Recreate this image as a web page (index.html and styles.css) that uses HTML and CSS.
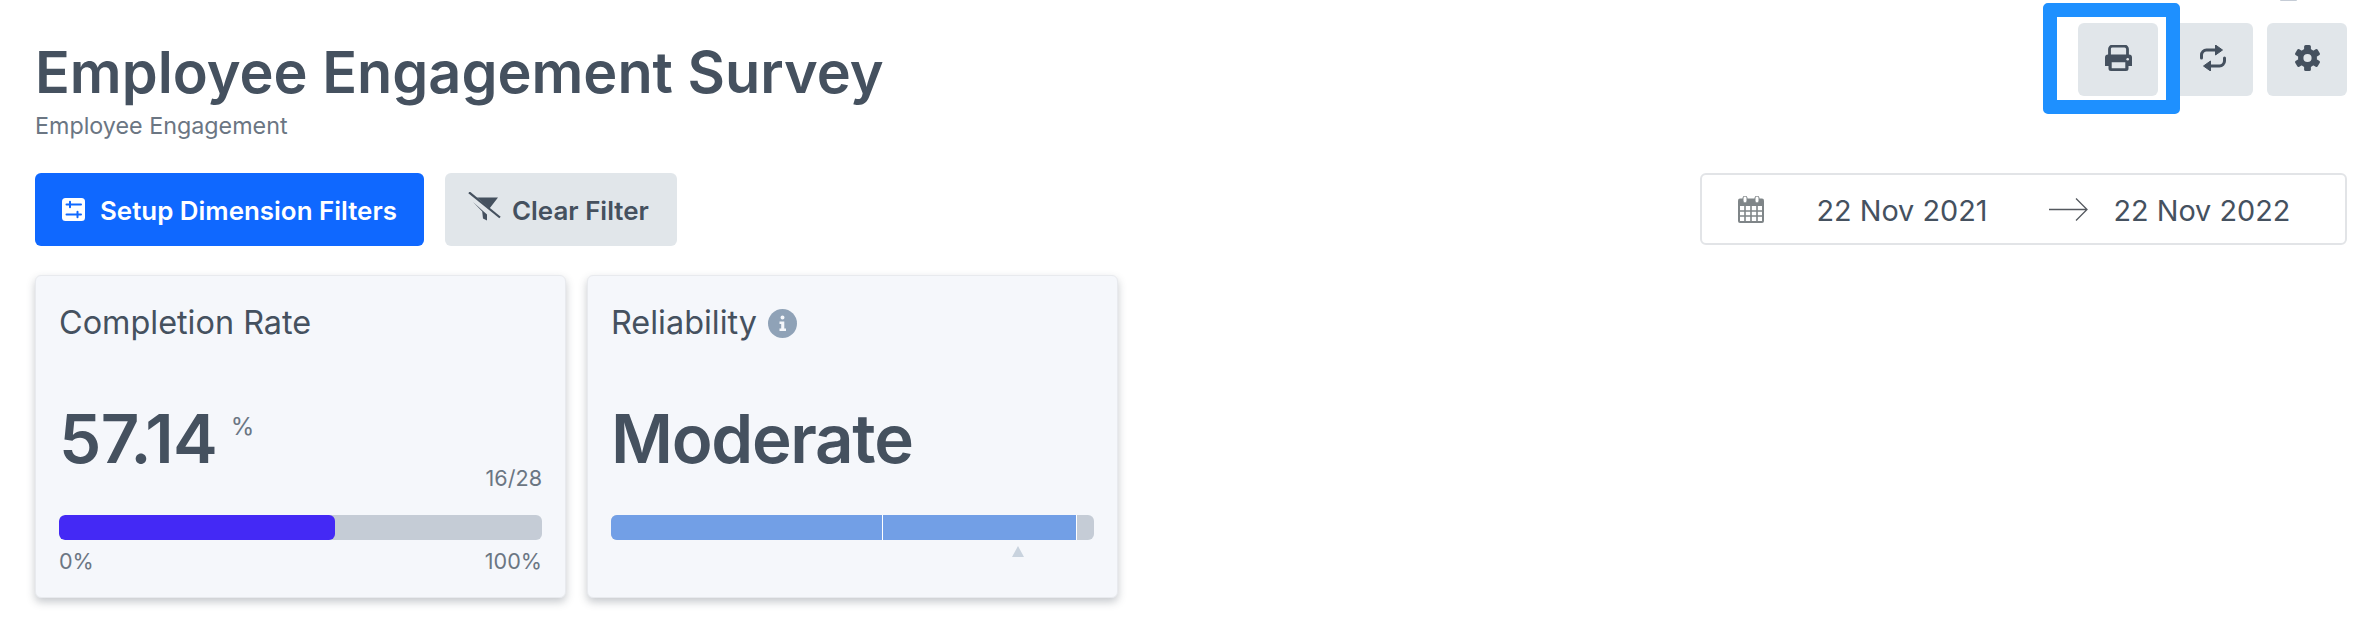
FILE: index.html
```html
<!DOCTYPE html>
<html lang="en">
<head>
<meta charset="utf-8">
<title>Employee Engagement Survey</title>
<link rel="stylesheet" href="styles.css">
</head>
<body>
<div class="top-mark"></div>
<main class="page">
  <header class="header">
    <div class="heading">
      <h1 class="title">Employee Engagement Survey</h1>
      <p class="subtitle">Employee Engagement</p>
    </div>
    <div class="actions">
      <button class="icon-btn icon-btn-print" type="button" aria-label="Print">
        <svg class="icon-print" viewBox="0 0 27 26"><path d="M4.500 11V4a3 3 0 0 1 3-3h12a3 3 0 0 1 3 3v7" fill="none" stroke="#45515f" stroke-width="2.800"/><path fill-rule="evenodd" fill="#45515f" d="M3 9.500h21a3 3 0 0 1 3 3v8.500h-3.500v2.500a2.500 2.500 0 0 1-2.500 2.500H6a2.500 2.500 0 0 1-2.500-2.500V21H0v-8.500a3 3 0 0 1 3-3zM6.700 17.300v6h13.600v-6z"/><circle cx="22.700" cy="14.200" r="1.300" fill="#e1e6ea"/></svg>
        <span class="highlight"></span>
      </button>
      <button class="icon-btn" type="button" aria-label="Refresh">
        <svg class="icon-repeat" viewBox="0 0 26 26"><g id="half"><path d="M1.500 13V10a5 5 0 0 1 5-5H16" fill="none" stroke="#45515f" stroke-width="3" stroke-linecap="round"/><path d="M15.500 0L22.500 5l-7 5z" fill="#45515f" stroke="#45515f" stroke-linejoin="round"/></g><use href="#half" transform="rotate(180 13 13)"/></svg>
      </button>
      <button class="icon-btn" type="button" aria-label="Settings">
        <svg class="icon-gear" viewBox="-12.500 -13 25 26"><circle r="6.800" fill="none" stroke="#45515f" stroke-width="5.400"/><g fill="#45515f"><rect x="-3.400" y="-13" width="6.800" height="6" rx="1.600"/><rect x="-3.400" y="-13" width="6.800" height="6" rx="1.600" transform="rotate(60)"/><rect x="-3.400" y="-13" width="6.800" height="6" rx="1.600" transform="rotate(120)"/><rect x="-3.400" y="-13" width="6.800" height="6" rx="1.600" transform="rotate(180)"/><rect x="-3.400" y="-13" width="6.800" height="6" rx="1.600" transform="rotate(240)"/><rect x="-3.400" y="-13" width="6.800" height="6" rx="1.600" transform="rotate(300)"/></g></svg>
      </button>
    </div>
  </header>

  <section class="toolbar">
    <div class="filters">
      <button class="btn btn-primary" type="button">
        <svg class="icon-sliders" viewBox="0 0 23 23"><rect width="23" height="23" rx="3.500" fill="#fff"/><g stroke="#0f68ff" stroke-width="2" fill="none" stroke-linecap="round"><path d="M4.500 6.500H19M8 3.800v5.400M4.500 16.500H19M15.500 13.800v5.400"/></g></svg>
        Setup Dimension Filters
      </button>
      <button class="btn btn-muted" type="button">
        <svg class="icon-clear" viewBox="0 0 33 29"><path d="M1 .3L32 25.500" stroke="#45515f" stroke-width="2.200" fill="none"/><path d="M9 5.500h21l-8.500 11zM5 10l14 12.500v6l-4-2-.8-7z" fill="#45515f"/></svg>
        Clear Filter
      </button>
    </div>
    <div class="date-range">
      <svg class="icon-calendar" viewBox="0 0 26 27"><rect y="2.500" width="26" height="24.500" rx="2" fill="#7f8588"/><g fill="#fff"><rect x="2" y="10" width="22" height="15"/><rect x="5" y="0" width="4" height="7" rx="2" stroke="#7f8588" stroke-width="1"/><rect x="17" y="0" width="4" height="7" rx="2" stroke="#7f8588" stroke-width="1"/></g><path d="M7 10v15M13 10v15M19 10v15M2 15h22M2 20h22" stroke="#7f8588" stroke-width="1.600"/></svg>
      <span class="date date-from">22 Nov 2021</span>
      <svg class="icon-arrow" viewBox="0 0 39 23"><path d="M0 11.500H38M27 .5l11 11-11 11" fill="none" stroke="#55595f" stroke-width="1.300"/></svg>
      <span class="date date-to">22 Nov 2022</span>
    </div>
  </section>

  <section class="cards">
    <article class="card">
      <h2 class="card-title">Completion Rate</h2>
      <div class="metric-row">
        <span class="metric metric-number">57.14</span><span class="unit">%</span>
      </div>
      <div class="count">16/28</div>
      <div class="bar"><div class="bar-fill" style="width:57.14%"></div></div>
      <div class="scale"><span>0%</span><span>100%</span></div>
    </article>
    <article class="card">
      <h2 class="card-title">Reliability
        <svg class="icon-info" viewBox="0 0 29 29"><circle cx="14.500" cy="14.500" r="14.500" fill="#8fa2b7"/><path d="M14.500 6.500a2 2 0 1 1 0 4 2 2 0 0 1 0-4zM11.500 12.500h4.800v7h1.700v2.500h-6.500v-2.500h1.700v-4.500h-1.700z" fill="#f5f7fb"/></svg>
      </h2>
      <div class="metric-row">
        <span class="metric">Moderate</span>
      </div>
      <div class="count count-empty"></div>
      <div class="bar bar-segments">
        <div class="seg seg-a"></div><div class="seg seg-b"></div>
      </div>
      <div class="pointer-track"><span class="pointer"></span></div>
    </article>
  </section>
</main>
</body>
</html>
```
FILE: styles.css
```css
* { box-sizing: border-box; }
html, body { margin: 0; padding: 0; background: #fff; }
body { font-family: Inter, "Liberation Sans", sans-serif; color: #45515f; height: 632px; overflow: hidden; position: relative; }
button { font-family: inherit; border: 0; cursor: pointer; }
.page { padding: 0 25px 0 35px; }
.top-mark { position: absolute; left: 2280px; top: 0; width: 17px; height: 1px; background: #c5ccd6; border-radius: 0 0 8px 8px; }

.header { display: flex; justify-content: space-between; align-items: flex-start; height: 173px; }
.heading { padding-top: 38px; }
.title { margin: 0; font-size: 57.600px; line-height: 68px; font-weight: 600; color: #45515f; }
.subtitle { margin: 7px 0 0; font-size: 23.300px; line-height: 26px; color: #6b7683; }

.actions { display: flex; gap: 14.500px; padding-top: 23px; }
.icon-btn { position: relative; width: 80px; height: 73px; padding: 0; border-radius: 6px; background: #e1e6ea; display: flex; align-items: center; justify-content: center; }
.icon-print { width: 27px; height: 26px; margin-top: -3px; }
.icon-repeat { width: 26px; height: 26px; margin-top: -3px; }
.icon-gear { width: 25px; height: 26px; margin-top: -3px; }
.highlight { position: absolute; left: -35px; top: -20px; width: 137px; height: 111px; border: 14px solid #1e90ff; border-radius: 5px; z-index: 2; }

.toolbar { display: flex; justify-content: space-between; align-items: flex-start; }
.filters { display: flex; gap: 21px; }
.btn { height: 73px; border-radius: 6px; display: flex; align-items: center; font-size: 25.920px; font-weight: 600; padding: 2px 0 0; }
.btn-primary { width: 389px; background: #0f68ff; color: #fff; padding-left: 27px; gap: 15px; }
.btn-muted { width: 232px; background: #e1e6ea; color: #45515f; padding-left: 23px; gap: 11px; }
.icon-sliders { width: 23px; height: 23px; margin-top: -2px; }
.icon-clear { width: 33px; height: 29px; margin-top: -8px; }

.date-range { width: 647px; height: 72px; border: 2px solid #e2e4e7; border-radius: 6px; display: flex; align-items: center; font-size: 28.800px; line-height: 34px; color: #45515f; padding-left: 36px; }
.icon-calendar { width: 26px; height: 27px; margin: 0 52.500px 0 0; }
.date { width: 171px; white-space: nowrap; padding-top: 3px; }
.icon-arrow { width: 39px; height: 23px; margin: 0 26px 0 61px; }

.cards { display: flex; gap: 21px; margin-top: 29px; }
.card { width: 531px; height: 323px; background: #f5f7fb; border: 1px solid #e8eaee; border-radius: 6px; box-shadow: 0 4px 9px rgba(50, 60, 75, .28); padding: 0 23px; }
.card-title { margin: 0; padding-top: 27px; height: 76px; font-size: 32.400px; line-height: 40px; font-weight: 400; color: #45515f; display: flex; align-items: flex-start; gap: 11px; }
.icon-info { width: 29px; height: 29px; margin-top: 6px; }
.metric-row { margin-top: 51px; height: 72px; display: flex; align-items: flex-start; }
.metric { font-size: 67.200px; line-height: 72px; font-weight: 600; letter-spacing: -1.300px; color: #45515f; }
.metric-number { letter-spacing: -.6px; }
.unit { font-size: 24px; line-height: 30px; margin-left: 13.500px; margin-top: 9px; color: #6b7683; }
.count { height: 52px; margin-top: -12px; text-align: right; font-size: 21.600px; line-height: 30px; color: #6b7683; }
.bar { height: 25px; border-radius: 6px; background: #c5ccd6; overflow: hidden; }
.bar-fill { height: 100%; background: #4429f5; border-radius: 6px; }
.bar-segments { display: flex; background: #c5ccd6; }
.seg { background: #729fe6; height: 100%; border-right: 1.500px solid #fff; }
.seg-a { width: 271.500px; }
.seg-b { width: 194.500px; }
.scale { display: flex; justify-content: space-between; margin-top: 6px; font-size: 21.600px; line-height: 30px; color: #6b7683; }
.pointer-track { position: relative; height: 20px; }
.pointer { position: absolute; left: 401px; top: 6px; width: 0; height: 0; border-left: 6px solid transparent; border-right: 6px solid transparent; border-bottom: 11px solid #c9d3de; }
```
